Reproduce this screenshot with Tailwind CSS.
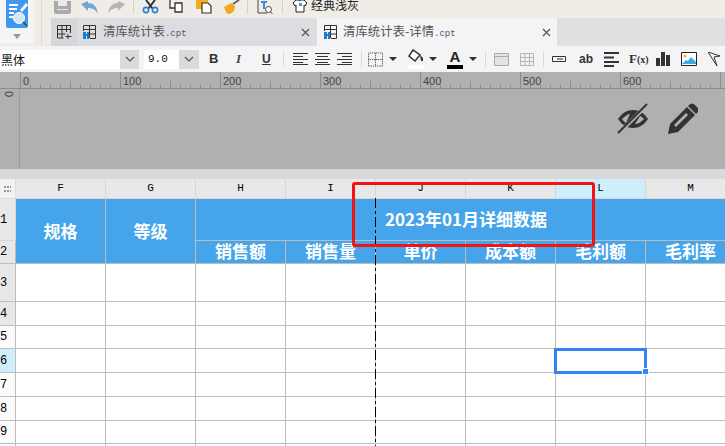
<!DOCTYPE html>
<html lang="en">
<head>
  <meta charset="UTF-8">
  <title>清库统计表-详情</title>
  <script src="https://cdn.jsdelivr.net/npm/@tailwindcss/browser@4"></script>
</head>
<body class="w-[725px] h-[446px] overflow-hidden bg-white font-['Noto_Sans_CJK_SC',sans-serif]">
<div class="relative w-[725px] h-[446px] overflow-hidden flex flex-col">

  <!-- top area: logo panel + toolbar + tabs -->
  <div class="flex h-[46px] bg-[#f0ede6] shrink-0">
    <div class="w-[34px] h-[43px] bg-[#f5f5f5] relative shrink-0 overflow-hidden">
      <svg class="ml-[6px] -mt-[2px]" width="22" height="31" viewBox="0 0 22 31">
        <rect width="22" height="30" rx="2" fill="#3f98ee"/>
        <path d="M3 7h9M3 11h8M3 15h5M3 19h4" stroke="#fff" stroke-width="2"/>
        <path d="M14 12l6-7 2 2-6 7z" fill="#fff"/>
        <circle cx="13" cy="20" r="5.5" fill="#cfe6f5" stroke="#fff"/>
        <path d="M17 24l4 4" stroke="#444" stroke-width="1.5"/>
      </svg>
      <div class="absolute left-[13px] top-[34px] w-0 h-0 border-x-[4px] border-x-transparent border-t-[5px] border-t-[#9a9a9a]"></div>
    </div>
    <div class="w-[8px] shrink-0 border-r border-[#dedbd3]"></div>
    <div class="flex-1 flex flex-col pl-[9px]">
      <!-- main toolbar, top of it is cut by the window -->
      <div class="h-[18px] flex items-end relative overflow-hidden">
        <svg class="w-[17px] h-[13px] ml-[3px] mb-[4px]" viewBox="0 0 17 13"><path d="M0 0h17v11a2 2 0 0 1-2 2H2a2 2 0 0 1-2-2z" fill="#aaa"/><path d="M4 0h9v5H4zM3 8h11v1H3z" fill="#e9e9e9"/></svg>
        <svg class="w-[17px] h-[13px] ml-[10px] mb-[4px]" viewBox="0 0 17 13"><path d="M0 3l7-3v2c5 0 9 3 10 11-2-4-5-6-10-6v3z" fill="#6da7dc"/></svg>
        <svg class="w-[17px] h-[13px] ml-[10px] mb-[4px]" viewBox="0 0 17 13"><path d="M17 3l-7-3v2C5 2 1 5 0 13c2-4 5-6 10-6v3z" fill="#b5b5b5"/></svg>
        <div class="w-px h-[14px] bg-[#d5d2cb] ml-[8px] mb-[4px]"></div>
        <svg class="w-[17px] h-[14px] ml-[8px] mb-[4px]" viewBox="0 0 17 14"><path d="M4 0l7 9M13 0L6 9" stroke="#333" stroke-width="2"/><circle cx="4" cy="10" r="2.6" fill="none" stroke="#2f7fd6" stroke-width="1.6"/><circle cx="13" cy="10" r="2.6" fill="none" stroke="#2f7fd6" stroke-width="1.6"/></svg>
        <svg class="w-[17px] h-[14px] ml-[10px] mb-[4px]" viewBox="0 0 17 14"><path d="M1 0v8h5M6 3h7v9H6z" fill="#fff" stroke="#333" stroke-width="1.3"/></svg>
        <svg class="w-[17px] h-[14px] ml-[10px] mb-[4px]" viewBox="0 0 17 14"><path d="M0 0h12v9H0z" fill="#f3ad1c"/><path d="M6 3h6l3 3v7H6z" fill="#fff" stroke="#333" stroke-width="1.2"/></svg>
        <svg class="w-[17px] h-[14px] ml-[10px] mb-[4px]" viewBox="0 0 17 14"><path d="M10 4l6-4" stroke="#666" stroke-width="2"/><path d="M1 7l7-4 4 3c0 5-3 8-7 8-2-1-3-4-4-7z" fill="#f0a91c"/></svg>
        <div class="w-px h-[14px] bg-[#d5d2cb] ml-[7px] mb-[4px]"></div>
        <svg class="w-[16px] h-[14px] ml-[9px] mb-[4px]" viewBox="0 0 16 14"><path d="M1 0v13h9" fill="none" stroke="#444"/><path d="M4 2h6M7 2v7" stroke="#3a8edb" stroke-width="2"/><circle cx="11.5" cy="9.5" r="3" fill="#fff" stroke="#444"/><path d="M13.5 12l2 2" stroke="#444"/></svg>
        <div class="w-px h-[14px] bg-[#d5d2cb] ml-[9px] mb-[4px]"></div>
        <svg class="w-[15px] h-[14px] ml-[9px] mb-[5px]" viewBox="0 0 15 14"><path d="M4 1L1 4l2 3 1-1v7h8V6l1 1 2-3-3-3H9a2 2 0 0 1-3 0z" fill="#fff" stroke="#222"/><path d="M7 4h3v3H7z" fill="#4a9be0"/></svg>
        <span class="ml-[4px] text-[12px] leading-[16px] text-[#222] mb-[5px]">经典浅灰</span>
      </div>
      <!-- tabs -->
      <div class="h-[28px] flex text-[12.4px] text-[#555]">
        <div class="w-[26px] bg-[#d6d7db] flex items-center justify-center">
          <svg width="15" height="14" viewBox="0 0 15 14"><path d="M.5 13V.5h13V8M5 .5V13M9.500 .5V7M.5 4.500h13M.5 9h8M.5 13h6M11 9v5M8.500 11.500h6" fill="none" stroke="#333"/></svg>
        </div>
        <div class="w-[241px] bg-[#dcdde1] flex items-center pl-[6px] pr-[7px] border-r border-[#f4f4f6]">
          <svg class="mr-[7px] shrink-0" width="13" height="14" viewBox="0 0 13 14"><path d="M.5 6V.5h12v13H7M6.500 .5V13M.5 4.500h12M7 9h6" fill="none" stroke="#333"/><path d="M0 7h3v7H0zM4 7h2v7H4zM2 9h3v2H2z" fill="#1d7ccc"/></svg>
          <span>清库统计表<span class="font-['Liberation_Mono'] text-[9px]">.cpt</span></span>
          <svg class="ml-auto" width="9" height="9" viewBox="0 0 9 9"><path d="M1 1l7 7M8 1L1 8" stroke="#555" stroke-width="1.200"/></svg>
        </div>
        <div class="w-[239px] bg-[#f4f4f6] flex items-center pl-[6px] pr-[6px]">
          <svg class="mr-[6px] shrink-0" width="13" height="14" viewBox="0 0 13 14"><path d="M.5 6V.5h12v13H7M6.500 .5V13M.5 4.500h12M7 9h6" fill="none" stroke="#333"/><path d="M0 7h3v7H0zM4 7h2v7H4zM2 9h3v2H2z" fill="#1d7ccc"/></svg>
          <span>清库统计表-详情<span class="font-['Liberation_Mono'] text-[9px]">.cpt</span></span>
          <svg class="ml-auto" width="9" height="9" viewBox="0 0 9 9"><path d="M1 1l7 7M8 1L1 8" stroke="#555" stroke-width="1.200"/></svg>
        </div>
        <div class="flex-1 bg-[#e0e0e2]"></div>
      </div>
    </div>
  </div>

  <!-- format bar -->
  <div class="h-[26px] shrink-0 bg-[#f4f4f6] flex items-center">
    <div class="w-[120px] h-[19px] bg-white text-[12px] leading-[19px] pl-[1px] text-[#111]">黑体</div>
    <div class="w-[19px] h-[19px] bg-[#dadadd] flex items-center justify-center">
      <svg width="10" height="6" viewBox="0 0 10 6"><path d="M1 1l4 4 4-4" fill="none" stroke="#555" stroke-width="1.200"/></svg>
    </div>
    <div class="w-[35px] h-[19px] ml-[5px] bg-white font-['Liberation_Mono'] text-[11px] leading-[19px] pl-[4px] text-[#111]">9.0</div>
    <div class="w-[20px] h-[19px] bg-[#dadadd] flex items-center justify-center">
      <svg width="10" height="6" viewBox="0 0 10 6"><path d="M1 1l4 4 4-4" fill="none" stroke="#555" stroke-width="1.200"/></svg>
    </div>
    <span class="ml-[10px] w-[10px] font-['Liberation_Sans'] font-bold text-[13px] text-[#333]">B</span>
    <span class="ml-[17px] w-[8px] font-['Liberation_Serif'] italic font-bold text-[13px] text-[#444]">I</span>
    <span class="ml-[18px] w-[10px] font-['Liberation_Sans'] font-bold text-[12px] underline text-[#333]">U</span>
    <div class="w-px h-[16px] bg-[#d9d9dc] ml-[11px]"></div>
    <svg class="ml-[9px]" width="15" height="12" viewBox="0 0 15 12"><path d="M0 .5h15M0 3.500h10M0 6.500h15M0 9.500h10M0 11.500h15" stroke="#333"/></svg>
    <svg class="ml-[7px]" width="15" height="12" viewBox="0 0 15 12"><path d="M0 .5h15M2 3.500h11M0 6.500h15M2 9.500h11M0 11.500h15" stroke="#333"/></svg>
    <svg class="ml-[7px]" width="15" height="12" viewBox="0 0 15 12"><path d="M0 .5h15M5 3.500h10M0 6.500h15M5 9.500h10M0 11.500h15" stroke="#333"/></svg>
    <div class="w-px h-[16px] bg-[#d9d9dc] ml-[9px]"></div>
    <svg class="ml-[6px]" width="15" height="15" viewBox="0 0 16 15"><path d="M.5.500h15v14H.5zM8 .5v14M.5 7.500h15" fill="none" stroke="#333" stroke-dasharray="1 1"/></svg>
    <div class="ml-[6px] w-0 h-0 border-x-[4px] border-x-transparent border-t-[4px] border-t-[#333]"></div>
    <svg class="ml-[11px]" width="17" height="20" viewBox="0 0 17 20"><path d="M5 1l-4 6 6 5 5-6z" fill="#fff" stroke="#333" stroke-width="1.500"/><path d="M12 6l3 3v3h-2z" fill="#333"/><path d="M0 16h16v4H0z" fill="#fff"/></svg>
    <div class="ml-[4px] w-0 h-0 border-x-[4px] border-x-transparent border-t-[4px] border-t-[#333]"></div>
    <div class="ml-[10px] w-[16px] h-[20px] flex flex-col items-center relative">
      <span class="font-['Liberation_Sans'] font-bold text-[15px] leading-[15px] text-[#222]">A</span>
      <div class="w-[16px] h-[4px] bg-black mt-[1px]"></div>
    </div>
    <div class="ml-[6px] w-0 h-0 border-x-[4px] border-x-transparent border-t-[4px] border-t-[#333]"></div>
    <div class="w-px h-[16px] bg-[#d9d9dc] ml-[8px]"></div>
    <svg class="ml-[8px]" width="15" height="13" viewBox="0 0 15 13"><path d="M.5.500h14v12H.5zM.5 3.500h14" fill="#e3e3e3" stroke="#aaa"/></svg>
    <svg class="ml-[11px]" width="14" height="13" viewBox="0 0 14 13"><path d="M.5.500h13v12H.5zM.5 4.500h13M.5 8.500h13M5 .5v12M9.500.5v12" fill="none" stroke="#b5b5b5"/></svg>
    <div class="w-px h-[16px] bg-[#d9d9dc] ml-[9px]"></div>
    <svg class="ml-[8px]" width="14" height="6" viewBox="0 0 14 6"><path d="M.5.500h13v5H.5zM5 3h6" fill="none" stroke="#333"/></svg>
    <span class="ml-[13px] font-['Liberation_Sans'] font-bold text-[12px] text-[#333] w-[14px]">ab</span>
    <svg class="ml-[11px]" width="15" height="15" viewBox="0 0 15 15"><path d="M0 1h15M0 5.500h10M0 10h15M0 14h10" stroke="#333" stroke-width="1.800"/></svg>
    <span class="ml-[10px] font-['Liberation_Serif'] font-bold text-[13px] text-[#333] w-[17px]">F<span class="text-[10px]">(x)</span></span>
    <svg class="ml-[10px]" width="14" height="14" viewBox="0 0 14 14"><path d="M0 6h4v8H0zM5 0h4v14H5zM10 3h4v11h-4z" fill="#333"/></svg>
    <svg class="ml-[11px]" width="16" height="14" viewBox="0 0 16 14"><path d="M.5.500h15v13H.5z" fill="#fff" stroke="#222"/><circle cx="4" cy="4" r="1.500" fill="#f3b32a"/><path d="M1 12l4-4 2 1 3-4 5 5v2z" fill="#3ba9e6"/></svg>
    <svg class="ml-[11px] shrink-0" width="13" height="14" viewBox="0 0 13 14"><path d="M0 0l12 4-6 1 3 9z" fill="none" stroke="#333"/></svg>
  </div>

  <!-- ruler + design area -->
  <div class="h-[97px] shrink-0 bg-[#b0b0b0] relative">
    <svg class="absolute left-0 top-0" width="725" height="17">
      <defs>
        <pattern id="ticks" x="20" y="0" width="100" height="17" patternUnits="userSpaceOnUse">
          <path d="M.5 0v17M50.500 9v8M10.500 13v4M20.500 13v4M30.500 13v4M40.500 13v4M60.500 13v4M70.500 13v4M80.500 13v4M90.500 13v4" stroke="#8c8c8c" fill="none"/>
        </pattern>
      </defs>
      <rect x="20" width="705" height="17" fill="url(#ticks)"/>
      <path d="M0 16.500h725" stroke="#8c8c8c"/>
      <path d="M20.500 0v17" stroke="#8c8c8c"/>
    </svg>
    <!-- ruler numbers -->
    <div class="flex absolute left-[23px] top-[3px] w-[702px] overflow-hidden font-['Liberation_Sans'] text-[11px] leading-[12px] text-[#444]">
      <span class="w-[100px] shrink-0">0</span><span class="w-[100px] shrink-0">100</span><span class="w-[100px] shrink-0">200</span><span class="w-[100px] shrink-0">300</span><span class="w-[100px] shrink-0">400</span><span class="w-[100px] shrink-0">500</span><span class="w-[100px] shrink-0">600</span>
    </div>
    <div class="absolute left-0 top-[17px] w-[20px] h-[80px] border-r border-[#9c9c9c]">
      <span class="absolute left-[6px] -top-[1px] rotate-90 font-['Liberation_Sans'] text-[11px] leading-[12px] text-[#444]">0</span>
    </div>
    <!-- eye / pencil -->
    <svg class="absolute left-[617px] top-[31px]" width="32" height="32" viewBox="0 0 32 32">
      <path d="M1 16c4-6 9-9 15-9s11 3 15 9c-4 6-9 9-15 9S5 22 1 16z" fill="#333"/>
      <path d="M5 16c3-3 6-5 8-5l-4 9c-1-1-3-2-4-4zM27 16c-3 3-6 5-9 5l5-8c2 1 3 2 4 3z" fill="#b0b0b0"/>
      <path d="M1 31L31 1" stroke="#b0b0b0" stroke-width="4"/>
      <path d="M1 30L30 1" stroke="#333" stroke-width="2"/>
    </svg>
    <svg class="absolute left-[668px] top-[31px]" width="30" height="31" viewBox="0 0 30 31">
      <path d="M0 31l2-10L19 4l8 8-17 17z" fill="#333"/>
      <path d="M21 2c2-2 4-2 6 0l2 2c2 2 2 4 0 6l-1 1-8-8z" fill="#333"/>
      <path d="M6 22l12-12 2 2L8 24z" fill="#b0b0b0"/>
    </svg>
  </div>

  <div class="h-[10px] shrink-0 bg-[#d9d9db]"></div>

  <!-- sheet -->
  <div class="flex-1 overflow-hidden">
    <div class="grid grid-cols-[16px_repeat(7,90px)_90px] grid-rows-[20px_42px_23px_38px_24px_23px_24px_24px_24px_23px_10px] w-[756px] font-['Liberation_Mono'] text-[11px] text-black" id="sheet">
      <div class="bg-[#f2f2f2] border-r border-b border-[#dcdcdc] flex items-center justify-center">
        <svg width="7" height="6"><path d="M0 0h2v2H0zM3 0h2v2H3zM6 0h1v2H6zM0 4h2v2H0zM3 4h2v2H3zM6 4h1v2H6z" fill="#999"/></svg>
      </div>
      <div class="bg-[#e8e8e8] border-r border-b border-[#d6d6d6] flex items-center justify-center">F</div>
      <div class="bg-[#e8e8e8] border-r border-b border-[#d6d6d6] flex items-center justify-center">G</div>
      <div class="bg-[#e8e8e8] border-r border-b border-[#d6d6d6] flex items-center justify-center">H</div>
      <div class="bg-[#e8e8e8] border-r border-b border-[#d6d6d6] flex items-center justify-center">I</div>
      <div class="bg-[#e8e8e8] border-r border-b border-[#d6d6d6] flex items-center justify-center">J</div>
      <div class="bg-[#e8e8e8] border-r border-b border-[#d6d6d6] flex items-center justify-center">K</div>
      <div class="bg-[#cdeefa] border-r border-b border-[#d6d6d6] flex items-center justify-center">L</div>
      <div class="bg-[#e8e8e8] border-r border-b border-[#d6d6d6] flex items-center justify-center">M</div>

      <div class="bg-[#e8e8e8] border-r border-b border-[#d6d6d6] flex items-center text-[12px]">1</div>
      <div class="row-span-2 bg-[#46a5ea] border-r border-b border-[#bdbdbd] flex items-center justify-center font-['Noto_Sans_CJK_SC'] font-bold text-[17px] text-white">规格</div>
      <div class="row-span-2 bg-[#46a5ea] border-r border-b border-[#bdbdbd] flex items-center justify-center font-['Noto_Sans_CJK_SC'] font-bold text-[17px] text-white">等级</div>
      <div class="col-span-6 bg-[#46a5ea] border-b border-[#bdbdbd] pb-[2px] flex items-center justify-center font-['Noto_Sans_CJK_SC'] font-bold text-[17px] text-white whitespace-nowrap">2023年01月详细数据</div>

      <div class="bg-[#e8e8e8] border-r border-b border-[#bdbdbd] flex items-center text-[12px]">2</div>
      <div class="bg-[#46a5ea] border-r border-b border-[#bdbdbd] pb-[3px] flex items-center justify-center font-['Noto_Sans_CJK_SC'] font-bold text-[17px] leading-none text-white">销售额</div>
      <div class="bg-[#46a5ea] border-r border-b border-[#bdbdbd] pb-[3px] flex items-center justify-center font-['Noto_Sans_CJK_SC'] font-bold text-[17px] leading-none text-white">销售量</div>
      <div class="bg-[#46a5ea] border-r border-b border-[#bdbdbd] pb-[3px] flex items-center justify-center font-['Noto_Sans_CJK_SC'] font-bold text-[17px] leading-none text-white">单价</div>
      <div class="bg-[#46a5ea] border-r border-b border-[#bdbdbd] pb-[3px] flex items-center justify-center font-['Noto_Sans_CJK_SC'] font-bold text-[17px] leading-none text-white">成本额</div>
      <div class="bg-[#46a5ea] border-r border-b border-[#bdbdbd] pb-[3px] flex items-center justify-center font-['Noto_Sans_CJK_SC'] font-bold text-[17px] leading-none text-white">毛利额</div>
      <div class="bg-[#46a5ea] border-r border-b border-[#bdbdbd] pb-[3px] flex items-center justify-center font-['Noto_Sans_CJK_SC'] font-bold text-[17px] leading-none text-white">毛利率</div>
    </div>
  </div>

  <!-- things lying over the sheet -->
  <svg class="absolute left-[375px] top-[198px]" width="1" height="248"><path d="M.5 0v248" stroke="#000" stroke-dasharray="10 3 3 3"/></svg>
  <div class="absolute left-[554px] top-[348px] w-[93px] h-[26px] border-[3px] border-[#3384f0]"></div>
  <div class="absolute left-[642px] top-[368px] w-[5px] h-[5px] bg-[#3384f0] border border-white box-content"></div>
  <div class="absolute left-[352px] top-[182px] w-[243px] h-[65px] border-[3px] border-[#f01414] rounded-[3px]"></div>
</div>

<script>
  // body rows of the sheet are all the same, only the row header differs
  const heads = {
    3: 'bg-[#e8e8e8] border-r border-b border-[#bdbdbd] flex items-center text-[12px]',
    4: 'bg-[#e8e8e8] border-r border-b border-[#bdbdbd] flex items-center text-[12px]',
    5: 'bg-[#fbfbfb] border-r border-b border-[#bdbdbd] flex items-center text-[12px]',
    6: 'bg-[#cdeefa] border-r border-b border-[#bdbdbd] flex items-center text-[12px]',
    7: 'bg-[#fbfbfb] border-r border-b border-[#bdbdbd] flex items-center text-[12px]',
    8: 'bg-[#fbfbfb] border-r border-b border-[#bdbdbd] flex items-center text-[12px]',
    9: 'bg-[#fbfbfb] border-r border-b border-[#bdbdbd] flex items-center text-[12px]',
    10: 'bg-[#fbfbfb] border-r border-[#bdbdbd] flex items-center text-[12px]'
  };
  const sheet = document.getElementById('sheet');
  for (let r = 3; r <= 10; r++) {
    let html = `<div class="${heads[r]}">${r < 10 ? r : ''}</div>`;
    for (let c = 0; c < 8; c++) html += '<div class="bg-white border-r border-b border-[#bdbdbd]"></div>';
    sheet.insertAdjacentHTML('beforeend', html);
  }
</script>
</body>
</html>
